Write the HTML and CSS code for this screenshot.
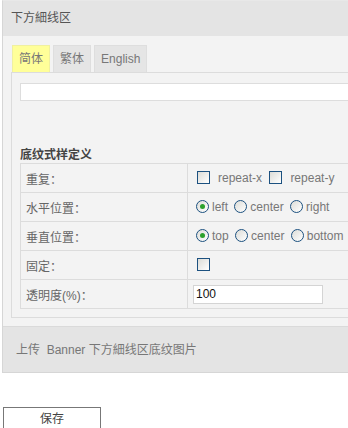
FILE: index.html
```html
<!DOCTYPE html>
<html>
<head>
<meta charset="utf-8">
<link rel="stylesheet" href="styles.css">
</head>
<body>
    <div class="panel">
        <div class="panel-head">下方細线区</div>
        <div class="panel-body">
            <div class="tabs">
                <span class="tab active">简体</span>
                <span class="tab">繁体</span>
                <span class="tab">English</span>
            </div>
            <div class="tab-box">
                <input class="text-field" type="text" value="">
                <div class="section-title">底纹式样定义</div>
                <table class="style-table">
                    <tr>
                        <td class="label">重复：</td>
                        <td class="value">
                            <span class="check"></span><span class="opt opt-wide">repeat-x</span>
                            <span class="check"></span><span class="opt opt-wide">repeat-y</span>
                        </td>
                    </tr>
                    <tr>
                        <td class="label">水平位置：</td>
                        <td class="value">
                            <span class="radio on"></span><span class="opt">left</span>
                            <span class="radio"></span><span class="opt">center</span>
                            <span class="radio"></span><span class="opt">right</span>
                        </td>
                    </tr>
                    <tr>
                        <td class="label">垂直位置：</td>
                        <td class="value">
                            <span class="radio on"></span><span class="opt">top</span>
                            <span class="radio"></span><span class="opt">center</span>
                            <span class="radio"></span><span class="opt">bottom</span>
                        </td>
                    </tr>
                    <tr>
                        <td class="label">固定：</td>
                        <td class="value"><span class="check"></span></td>
                    </tr>
                    <tr>
                        <td class="label">透明度(%)：</td>
                        <td class="value"><input class="small-field" type="text" value="100"></td>
                    </tr>
                </table>
            </div>
        </div>
        <div class="panel-foot">上传&nbsp; Banner 下方細线区底纹图片</div>
    </div>
    <button class="save-btn">保存</button>
</body>
</html>
```

FILE: styles.css
```css
html, body {
    margin: 0;
}
body {
    background: #ffffff;
    font-family: "Liberation Sans", "Noto Sans CJK SC", sans-serif;
    font-size: 12px;
    color: #666666;
}

/* panel runs off the right edge in the original, so no right border */
.panel {
    box-sizing: border-box;
    width: calc(100% - 2px);
    margin-left: 2px;
    border: 1px solid #d6d6d6;
    border-top-color: #e8e8e8;
    border-right: none;
}

.panel-head {
    height: 35px;
    line-height: 34px;
    padding-left: 8px;
    background: #e4e4e4;
    color: #555555;
}

.panel-body {
    background: #f3f3f3;
    padding: 9px 0 8px 8px;
}

.tabs {
    display: flex;
    gap: 3px;
    padding-left: 1px;
    height: 27px;
}
.tab {
    display: block;
    height: 26px;
    line-height: 26px;
    padding: 0 6px;
    background: #e5e5e5;
    border: 1px solid #dedede;
    border-bottom: none;
    color: #777777;
}
.tab.active {
    background: #ffff99;
    border-color: #f0f0a0;
    color: #777777;
}

.tab-box {
    border: 1px solid #dcdcdc;
    border-right: none;
    padding: 10px 0 8px 8px;
}

.text-field {
    display: block;
    box-sizing: border-box;
    width: 100%;
    height: 18px;
    margin: 0;
    border: 1px solid #dddddd;
    border-right: none;
    background: #ffffff;
}

.section-title {
    margin-top: 46px;
    height: 16px;
    line-height: 16px;
    font-weight: bold;
    color: #444444;
}

.style-table {
    border-collapse: collapse;
    width: 100%;
}
.style-table td {
    height: 28px;
    border: 1px solid #dcdcdc;
    padding: 0 0 0 5px;
    white-space: nowrap;
    overflow: hidden;
}
.style-table td.label {
    width: 161px;
    color: #666666;
}
.style-table td.value {
    border-right: none;
    color: #777777;
}

.check, .radio {
    display: inline-block;
    vertical-align: middle;
    box-sizing: border-box;
    width: 13px;
    height: 13px;
    border: 1px solid #1c5180;
    background: linear-gradient(135deg, #dcdcd7, #ffffff);
    margin: -2px 0 0 4px;
}
.radio {
    border-radius: 50%;
    margin-left: 3px;
    position: relative;
}
.radio.on::after {
    content: "";
    position: absolute;
    left: 3px;
    top: 3px;
    width: 5px;
    height: 5px;
    border-radius: 50%;
    background: #2ca12c;
}
.opt {
    display: inline-block;
    vertical-align: middle;
    margin-left: 3px;
}
.opt-wide {
    margin-left: 8px;
}

.small-field {
    box-sizing: border-box;
    width: 130px;
    height: 19px;
    margin: 0;
    border: 1px solid #d4d4d4;
    background: #ffffff;
    font-family: "Liberation Sans", sans-serif;
    font-size: 12px;
    color: #111111;
    padding: 0 2px;
    vertical-align: middle;
}

.panel-foot {
    height: 45px;
    line-height: 46px;
    padding-left: 13px;
    background: #e4e4e4;
    border-top: 1px solid #dadada;
    color: #777777;
}

.save-btn {
    display: block;
    margin: 34px 0 0 3px;
    width: 98px;
    height: 24px;
    background: #ffffff;
    border: 1px solid #777777;
    font-family: "Noto Sans CJK SC", sans-serif;
    font-size: 12px;
    color: #444444;
    padding: 0 0 4px;
}
```
